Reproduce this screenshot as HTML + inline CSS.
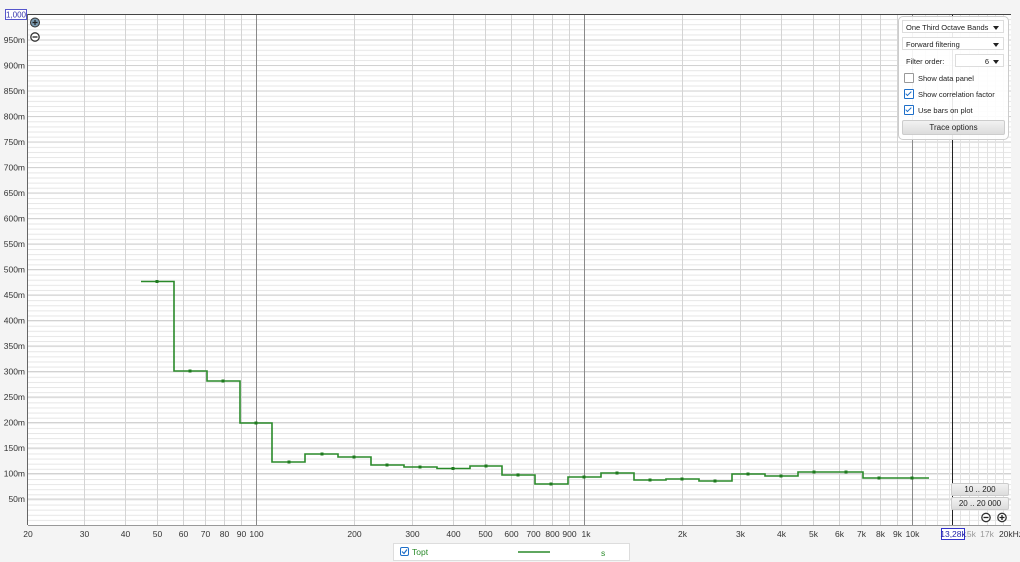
<!DOCTYPE html>
<html><head><meta charset="utf-8"><style>
body{margin:0;width:1020px;height:562px;background:#f4f4f4;font-family:"Liberation Sans",sans-serif;overflow:hidden;position:relative}
svg{position:absolute;left:0;top:0}
.yl{font-size:8.5px;fill:#333;text-anchor:end}
.xl{font-size:8.5px;fill:#333;text-anchor:middle}
.panel{position:absolute;left:898px;top:16px;width:109px;height:122px;background:rgba(255,255,255,0.9);border:1px solid #ccc;border-radius:5px;font-size:7.5px;color:#222}
.dd{position:absolute;background:#fff;border:1px solid #ddd;height:13px;line-height:13px;padding-left:3px;box-sizing:border-box;white-space:nowrap;overflow:hidden}
.dd:after{content:"";position:absolute;right:4px;top:5px;border:3px solid transparent;border-top:4px solid #222}
.cb{position:absolute;left:5px;font-size:7.5px}
.cb i{display:inline-block;width:8px;height:8px;border:1px solid #999;border-radius:1px;vertical-align:-2px;margin-right:4px;background:#fff;position:relative}
.cb i.on{border-color:#1e6fc9}
.cb i.on:after{content:"";position:absolute;left:2px;top:0px;width:2px;height:5px;border:solid #1e6fc9;border-width:0 1.3px 1.3px 0;transform:rotate(45deg)}
.btn{position:absolute;background:linear-gradient(#f2f2f2,#dcdcdc);border:1px solid #ccc;border-radius:2px;text-align:center;font-size:8px;color:#222}
</style></head><body>
<svg width="1020" height="562">
<defs><pattern id="hp" x="0" y="14" width="10" height="5.11" patternUnits="userSpaceOnUse"><line x1="0" y1="0.5" x2="10" y2="0.5" stroke="#e6e6e6" stroke-width="1"/></pattern></defs>
<rect x="28" y="14" width="983" height="511" fill="#fff"/>
<rect x="28" y="14" width="983" height="511" fill="url(#hp)"/>
<g stroke="#d2d2d2" stroke-width="1">
<line x1="28" x2="1011" y1="40" y2="40"/><line x1="28" x2="1011" y1="65.5" y2="65.5"/><line x1="28" x2="1011" y1="91" y2="91"/><line x1="28" x2="1011" y1="116.5" y2="116.5"/><line x1="28" x2="1011" y1="142" y2="142"/><line x1="28" x2="1011" y1="167.5" y2="167.5"/><line x1="28" x2="1011" y1="193" y2="193"/><line x1="28" x2="1011" y1="218.5" y2="218.5"/><line x1="28" x2="1011" y1="244" y2="244"/><line x1="28" x2="1011" y1="269.5" y2="269.5"/><line x1="28" x2="1011" y1="295" y2="295"/><line x1="28" x2="1011" y1="320.5" y2="320.5"/><line x1="28" x2="1011" y1="346" y2="346"/><line x1="28" x2="1011" y1="371.5" y2="371.5"/><line x1="28" x2="1011" y1="397" y2="397"/><line x1="28" x2="1011" y1="422.5" y2="422.5"/><line x1="28" x2="1011" y1="448" y2="448"/><line x1="28" x2="1011" y1="473.5" y2="473.5"/><line x1="28" x2="1011" y1="499" y2="499"/>
</g>
<g stroke="#d4d4d4" stroke-width="1">
<line x1="84.5" x2="84.5" y1="14" y2="525"/><line x1="125.5" x2="125.5" y1="14" y2="525"/><line x1="157.5" x2="157.5" y1="14" y2="525"/><line x1="183.5" x2="183.5" y1="14" y2="525"/><line x1="205.5" x2="205.5" y1="14" y2="525"/><line x1="224.5" x2="224.5" y1="14" y2="525"/><line x1="241.5" x2="241.5" y1="14" y2="525"/>
<line x1="354.5" x2="354.5" y1="14" y2="525"/><line x1="412.5" x2="412.5" y1="14" y2="525"/><line x1="453.5" x2="453.5" y1="14" y2="525"/><line x1="485.5" x2="485.5" y1="14" y2="525"/><line x1="511.5" x2="511.5" y1="14" y2="525"/><line x1="533.5" x2="533.5" y1="14" y2="525"/><line x1="552.5" x2="552.5" y1="14" y2="525"/><line x1="569.5" x2="569.5" y1="14" y2="525"/>
<line x1="682.5" x2="682.5" y1="14" y2="525"/><line x1="740.5" x2="740.5" y1="14" y2="525"/><line x1="781.5" x2="781.5" y1="14" y2="525"/><line x1="813.5" x2="813.5" y1="14" y2="525"/><line x1="839.5" x2="839.5" y1="14" y2="525"/><line x1="861.5" x2="861.5" y1="14" y2="525"/><line x1="880.5" x2="880.5" y1="14" y2="525"/><line x1="897.5" x2="897.5" y1="14" y2="525"/>
</g>
<g stroke="#e2e2e2" stroke-width="1">
<line x1="925.5" x2="925.5" y1="14" y2="525"/><line x1="937.5" x2="937.5" y1="14" y2="525"/><line x1="949.5" x2="949.5" y1="14" y2="525"/><line x1="960.5" x2="960.5" y1="14" y2="525"/><line x1="969.5" x2="969.5" y1="14" y2="525"/><line x1="978.5" x2="978.5" y1="14" y2="525"/><line x1="987.5" x2="987.5" y1="14" y2="525"/><line x1="995.5" x2="995.5" y1="14" y2="525"/><line x1="1003.5" x2="1003.5" y1="14" y2="525"/>
</g>
<g stroke="#8a8a8a" stroke-width="1">
<line x1="256.5" x2="256.5" y1="14" y2="525"/><line x1="584.5" x2="584.5" y1="14" y2="525"/><line x1="912.5" x2="912.5" y1="14" y2="525"/>
</g>
<line x1="952.5" x2="952.5" y1="14" y2="525" stroke="#222" stroke-width="1"/>
<line x1="28" x2="1011" y1="14.5" y2="14.5" stroke="#444"/>
<line x1="27.5" x2="27.5" y1="14" y2="525" stroke="#666"/>
<line x1="28" x2="1011" y1="525.5" y2="525.5" stroke="#999"/>
<path d="M141 281.5 H174 V371 H207 V381 H240 V423 H272 V462 H305 V454 H338 V457 H371 V465 H404 V467 H437 V468.5 H470 V466 H502 V475 H535 V484 H568 V477 H601 V473 H634 V480 H666 V479 H699 V481 H732 V474 H765 V476 H798 V472 H830 V472 H863 V478 H929" fill="none" stroke="#2a8a2a" stroke-width="1.6"/>
<g fill="#1f7a1f">
<rect x="155.5" y="280" width="3" height="3"/><rect x="188.5" y="369.5" width="3" height="3"/><rect x="221.5" y="379.5" width="3" height="3"/><rect x="254.5" y="421.5" width="3" height="3"/><rect x="287.5" y="460.5" width="3" height="3"/><rect x="320.5" y="452.5" width="3" height="3"/><rect x="352.5" y="455.5" width="3" height="3"/><rect x="385.5" y="463.5" width="3" height="3"/><rect x="418.5" y="465.5" width="3" height="3"/><rect x="451.5" y="467" width="3" height="3"/><rect x="484.5" y="464.5" width="3" height="3"/><rect x="516.5" y="473.5" width="3" height="3"/><rect x="549.5" y="482.5" width="3" height="3"/><rect x="582.5" y="475.5" width="3" height="3"/><rect x="615.5" y="471.5" width="3" height="3"/><rect x="648.5" y="478.5" width="3" height="3"/><rect x="680.5" y="477.5" width="3" height="3"/><rect x="713.5" y="479.5" width="3" height="3"/><rect x="746.5" y="472.5" width="3" height="3"/><rect x="779.5" y="474.5" width="3" height="3"/><rect x="812.5" y="470.5" width="3" height="3"/><rect x="844.5" y="470.5" width="3" height="3"/><rect x="877.5" y="476.5" width="3" height="3"/><rect x="910.5" y="476.5" width="3" height="3"/>
</g>
<g class="yl">
<text x="25" y="43">950m</text><text x="25" y="68.5">900m</text><text x="25" y="94">850m</text><text x="25" y="119.5">800m</text><text x="25" y="145">750m</text><text x="25" y="170.5">700m</text><text x="25" y="196">650m</text><text x="25" y="221.5">600m</text><text x="25" y="247">550m</text><text x="25" y="272.5">500m</text><text x="25" y="298">450m</text><text x="25" y="323.5">400m</text><text x="25" y="349">350m</text><text x="25" y="374.5">300m</text><text x="25" y="400">250m</text><text x="25" y="425.5">200m</text><text x="25" y="451">150m</text><text x="25" y="476.5">100m</text><text x="25" y="502">50m</text>
</g>
<rect x="5.5" y="9.5" width="21" height="10" fill="#fff" stroke="#5555cc"/>
<text x="16" y="17.5" style="font-size:8px;fill:#3333aa;text-anchor:middle">1,000</text>
<g class="xl">
<text x="28" y="537">20</text><text x="84.5" y="537">30</text><text x="125.5" y="537">40</text><text x="157.5" y="537">50</text><text x="183.5" y="537">60</text><text x="205.5" y="537">70</text><text x="224.5" y="537">80</text><text x="241.5" y="537">90</text><text x="256.5" y="537">100</text><text x="354.5" y="537">200</text><text x="412.5" y="537">300</text><text x="453.5" y="537">400</text><text x="485.5" y="537">500</text><text x="511.5" y="537">600</text><text x="533.5" y="537">700</text><text x="552.5" y="537">800</text><text x="569.5" y="537">900</text><text x="586" y="537">1k</text><text x="682.5" y="537">2k</text><text x="740.5" y="537">3k</text><text x="781.5" y="537">4k</text><text x="813.5" y="537">5k</text><text x="839.5" y="537">6k</text><text x="861.5" y="537">7k</text><text x="880.5" y="537">8k</text><text x="897.5" y="537">9k</text><text x="912.5" y="537">10k</text>
<text x="969" y="537" fill="#999">15k</text><text x="987" y="537" fill="#999">17k</text><text x="1011" y="537">20kHz</text>
</g>
<rect x="941.5" y="528.5" width="23" height="11" fill="#fff" stroke="#3333cc"/>
<text x="953" y="537" style="font-size:8.5px;fill:#2222aa;text-anchor:middle">13,28k</text>
<circle cx="35" cy="22.5" r="4.5" fill="#7a9ab0" stroke="#333" stroke-width="1"/><path d="M32.5 22.5h5M35 20v5" stroke="#222" stroke-width="1.2"/>
<circle cx="35" cy="37" r="4.2" fill="#fff" stroke="#333" stroke-width="1.3"/><path d="M32.5 37h5" stroke="#222" stroke-width="1.3"/>
<circle cx="986" cy="517.5" r="4.2" fill="#fff" stroke="#333" stroke-width="1.3"/><path d="M983.5 517.5h5" stroke="#222" stroke-width="1.3"/>
<circle cx="1002" cy="517.5" r="4.2" fill="#fff" stroke="#333" stroke-width="1.3"/><path d="M999.5 517.5h5M1002 515v5" stroke="#222" stroke-width="1.3"/>
<rect x="393.5" y="543.5" width="236" height="17" fill="#fff" stroke="#ddd"/>
<rect x="400.5" y="547.5" width="8" height="8" rx="1.5" fill="#fff" stroke="#1e6fc9"/>
<path d="M402 551.5l2 2 3-4" fill="none" stroke="#1e6fc9" stroke-width="1.2"/>
<text x="412" y="555" style="font-size:8.5px;fill:#2a8a2a">Topt</text>
<line x1="518" x2="550" y1="552" y2="552" stroke="#2a8a2a" stroke-width="1.6"/>
<text x="601" y="556" style="font-size:8.5px;fill:#2a8a2a">s</text>
</svg>
<div class="btn" style="left:951px;top:483px;width:56px;height:11px;line-height:11px">10 .. 200</div>
<div class="btn" style="left:951px;top:497px;width:56px;height:11px;line-height:11px">20 .. 20 000</div>
<div class="panel">
<div class="dd" style="left:3px;top:3px;width:102px">One Third Octave Bands</div>
<div class="dd" style="left:3px;top:20px;width:102px">Forward filtering</div>
<div style="position:absolute;left:7px;top:40px">Filter order:</div>
<div class="dd" style="left:56px;top:37px;width:49px;text-align:right;padding-right:14px">6</div>
<div class="cb" style="top:56px"><i></i>Show data panel</div>
<div class="cb" style="top:72px"><i class="on"></i>Show correlation factor</div>
<div class="cb" style="top:88px"><i class="on"></i>Use bars on plot</div>
<div class="btn" style="left:3px;top:103px;width:101px;height:13px;line-height:13px">Trace options</div>
</div>
</body></html>
